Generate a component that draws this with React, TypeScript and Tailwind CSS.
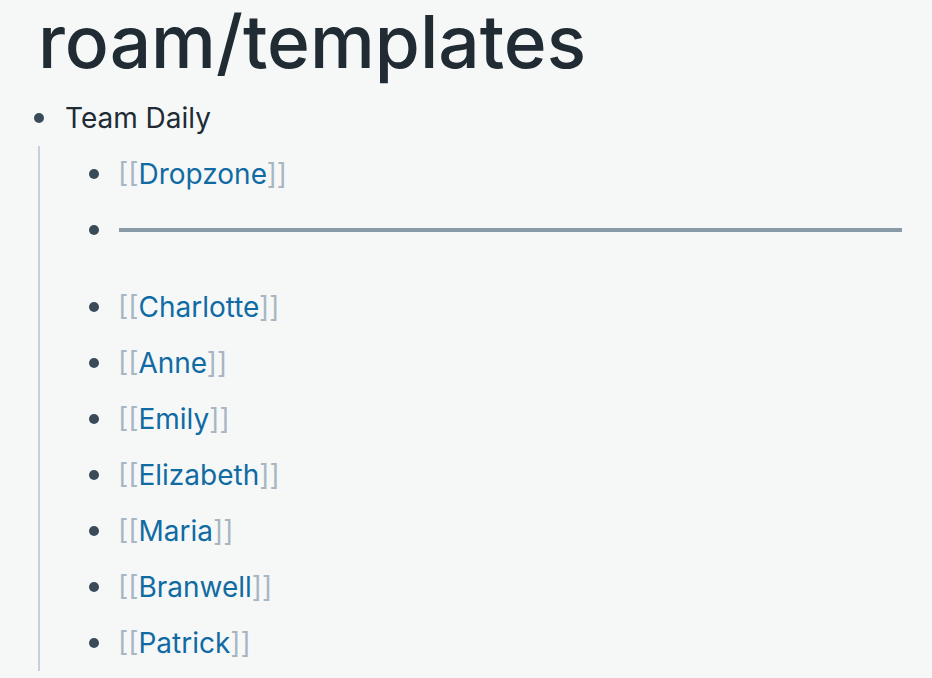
import React from "react";

const names = ["Charlotte", "Anne", "Emily", "Elizabeth", "Maria", "Branwell", "Patrick"];

function Bullet() {
  return <span className="w-[10px] h-[10px] rounded-full bg-[#394b59] block" />;
}

function Link({ name }: { name: string }) {
  return (
    <span>
      <span className="text-[#a7b6c2]">[[</span>
      <span className="text-[#106ba3]">{name}</span>
      <span className="text-[#a7b6c2]">]]</span>
    </span>
  );
}

function Row({ children }: { children: React.ReactNode }) {
  return (
    <div className="flex items-center h-[56px]">
      <div className="w-[26px] flex justify-center shrink-0">
        <Bullet />
      </div>
      <div className="pl-[11px] text-[28px] leading-[34px]">{children}</div>
    </div>
  );
}

export default function App() {
  return (
    <div
      className="w-[932px] h-[678px] bg-[#f6f8f8] text-[#202b33] overflow-hidden"
      style={{ fontFamily: "Inter, 'Noto Sans', sans-serif" }}
    >
      <div className="h-[90px] pl-[38px]">
        <h1 className="text-[73px] font-medium leading-[84px] text-[#202b33]">roam/templates</h1>
      </div>
      <div className="pl-[26px]">
        <div className="flex items-center h-[56px]">
          <div className="w-[26px] flex justify-center shrink-0">
            <Bullet />
          </div>
          <div className="pl-[13px] text-[28px] leading-[34px] text-[#202b33]">Team Daily</div>
        </div>
        <div className="ml-[12px] border-l-2 border-[#c5d0da] pl-[41px] pr-[30px]">
          <Row>
            <Link name="Dropzone" />
          </Row>
          <div className="flex items-start h-[77px]">
            <div className="w-[26px] flex justify-center shrink-0 h-[56px] items-center">
              <Bullet />
            </div>
            <div className="flex-1 h-[56px] flex items-center pl-[12px]">
              <div className="w-full h-[4px] bg-[#8a9ba8]" />
            </div>
          </div>
          {names.map((n) => (
            <Row key={n}>
              <Link name={n} />
            </Row>
          ))}
        </div>
      </div>
    </div>
  );
}
